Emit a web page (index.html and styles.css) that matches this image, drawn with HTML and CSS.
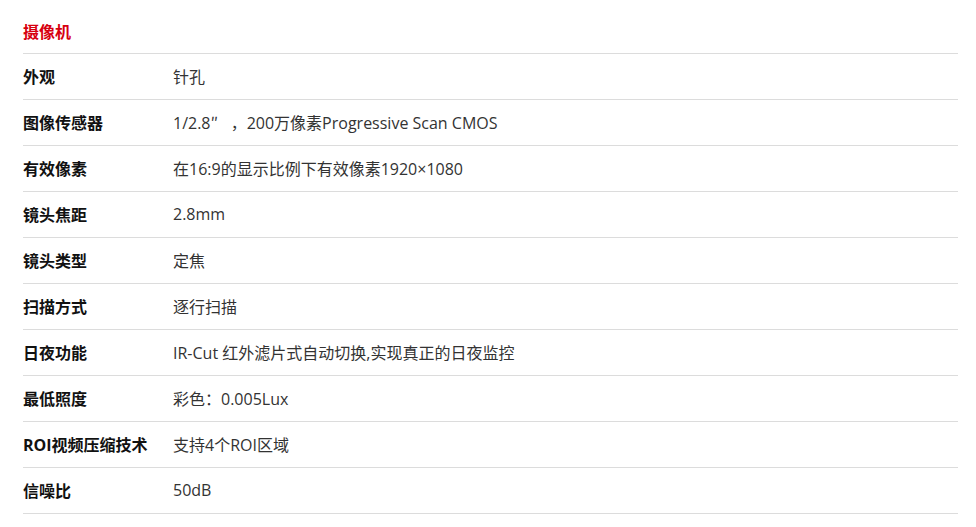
FILE: index.html
```html
<!DOCTYPE html>
<html lang="zh">
<head>
<meta charset="utf-8">
<link rel="stylesheet" href="styles.css">
</head>
<body>
<div class="spec">
  <div class="title">摄像机</div>
  <div class="row"><div class="label">外观</div><div class="value">针孔</div></div>
  <div class="row"><div class="label">图像传感器</div><div class="value">1/2.8<span class="cjk">″</span> ，200万像素Progressive Scan CMOS</div></div>
  <div class="row"><div class="label">有效像素</div><div class="value">在16:9的显示比例下有效像素1920×1080</div></div>
  <div class="row"><div class="label">镜头焦距</div><div class="value">2.8mm</div></div>
  <div class="row"><div class="label">镜头类型</div><div class="value">定焦</div></div>
  <div class="row"><div class="label">扫描方式</div><div class="value">逐行扫描</div></div>
  <div class="row"><div class="label">日夜功能</div><div class="value">IR-Cut 红外滤片式自动切换,实现真正的日夜监控</div></div>
  <div class="row"><div class="label">最低照度</div><div class="value">彩色：0.005Lux</div></div>
  <div class="row"><div class="label">ROI视频压缩技术</div><div class="value">支持4个ROI区域</div></div>
  <div class="row"><div class="label">信噪比</div><div class="value">50dB</div></div>
</div>
</body>
</html>
```
FILE: styles.css
```css
html, body {
  margin: 0;
  padding: 0;
  background: #fff;
}
body {
  font-family: "Open Sans", "Noto Sans CJK SC", sans-serif;
  font-size: 16px;
  color: #333;
}
.spec {
  margin-left: 23px;
  width: 935px;
}
.title {
  padding-top: 21px;
  height: 32px;
  line-height: 22px;
  color: #d7000f;
  font-weight: bold;
  border-bottom: 1px solid #dcdcdc;
}
.row {
  display: flex;
  align-items: center;
  height: 44px;
  padding-bottom: 1px;
  border-bottom: 1px solid #dcdcdc;
}
.label {
  width: 150px;
  flex: none;
  font-weight: bold;
  color: #111;
}
.value {
  color: #333;
}
.cjk {
  font-family: "Noto Sans CJK SC", sans-serif;
  display: inline-block;
  width: 1em;
}
```
